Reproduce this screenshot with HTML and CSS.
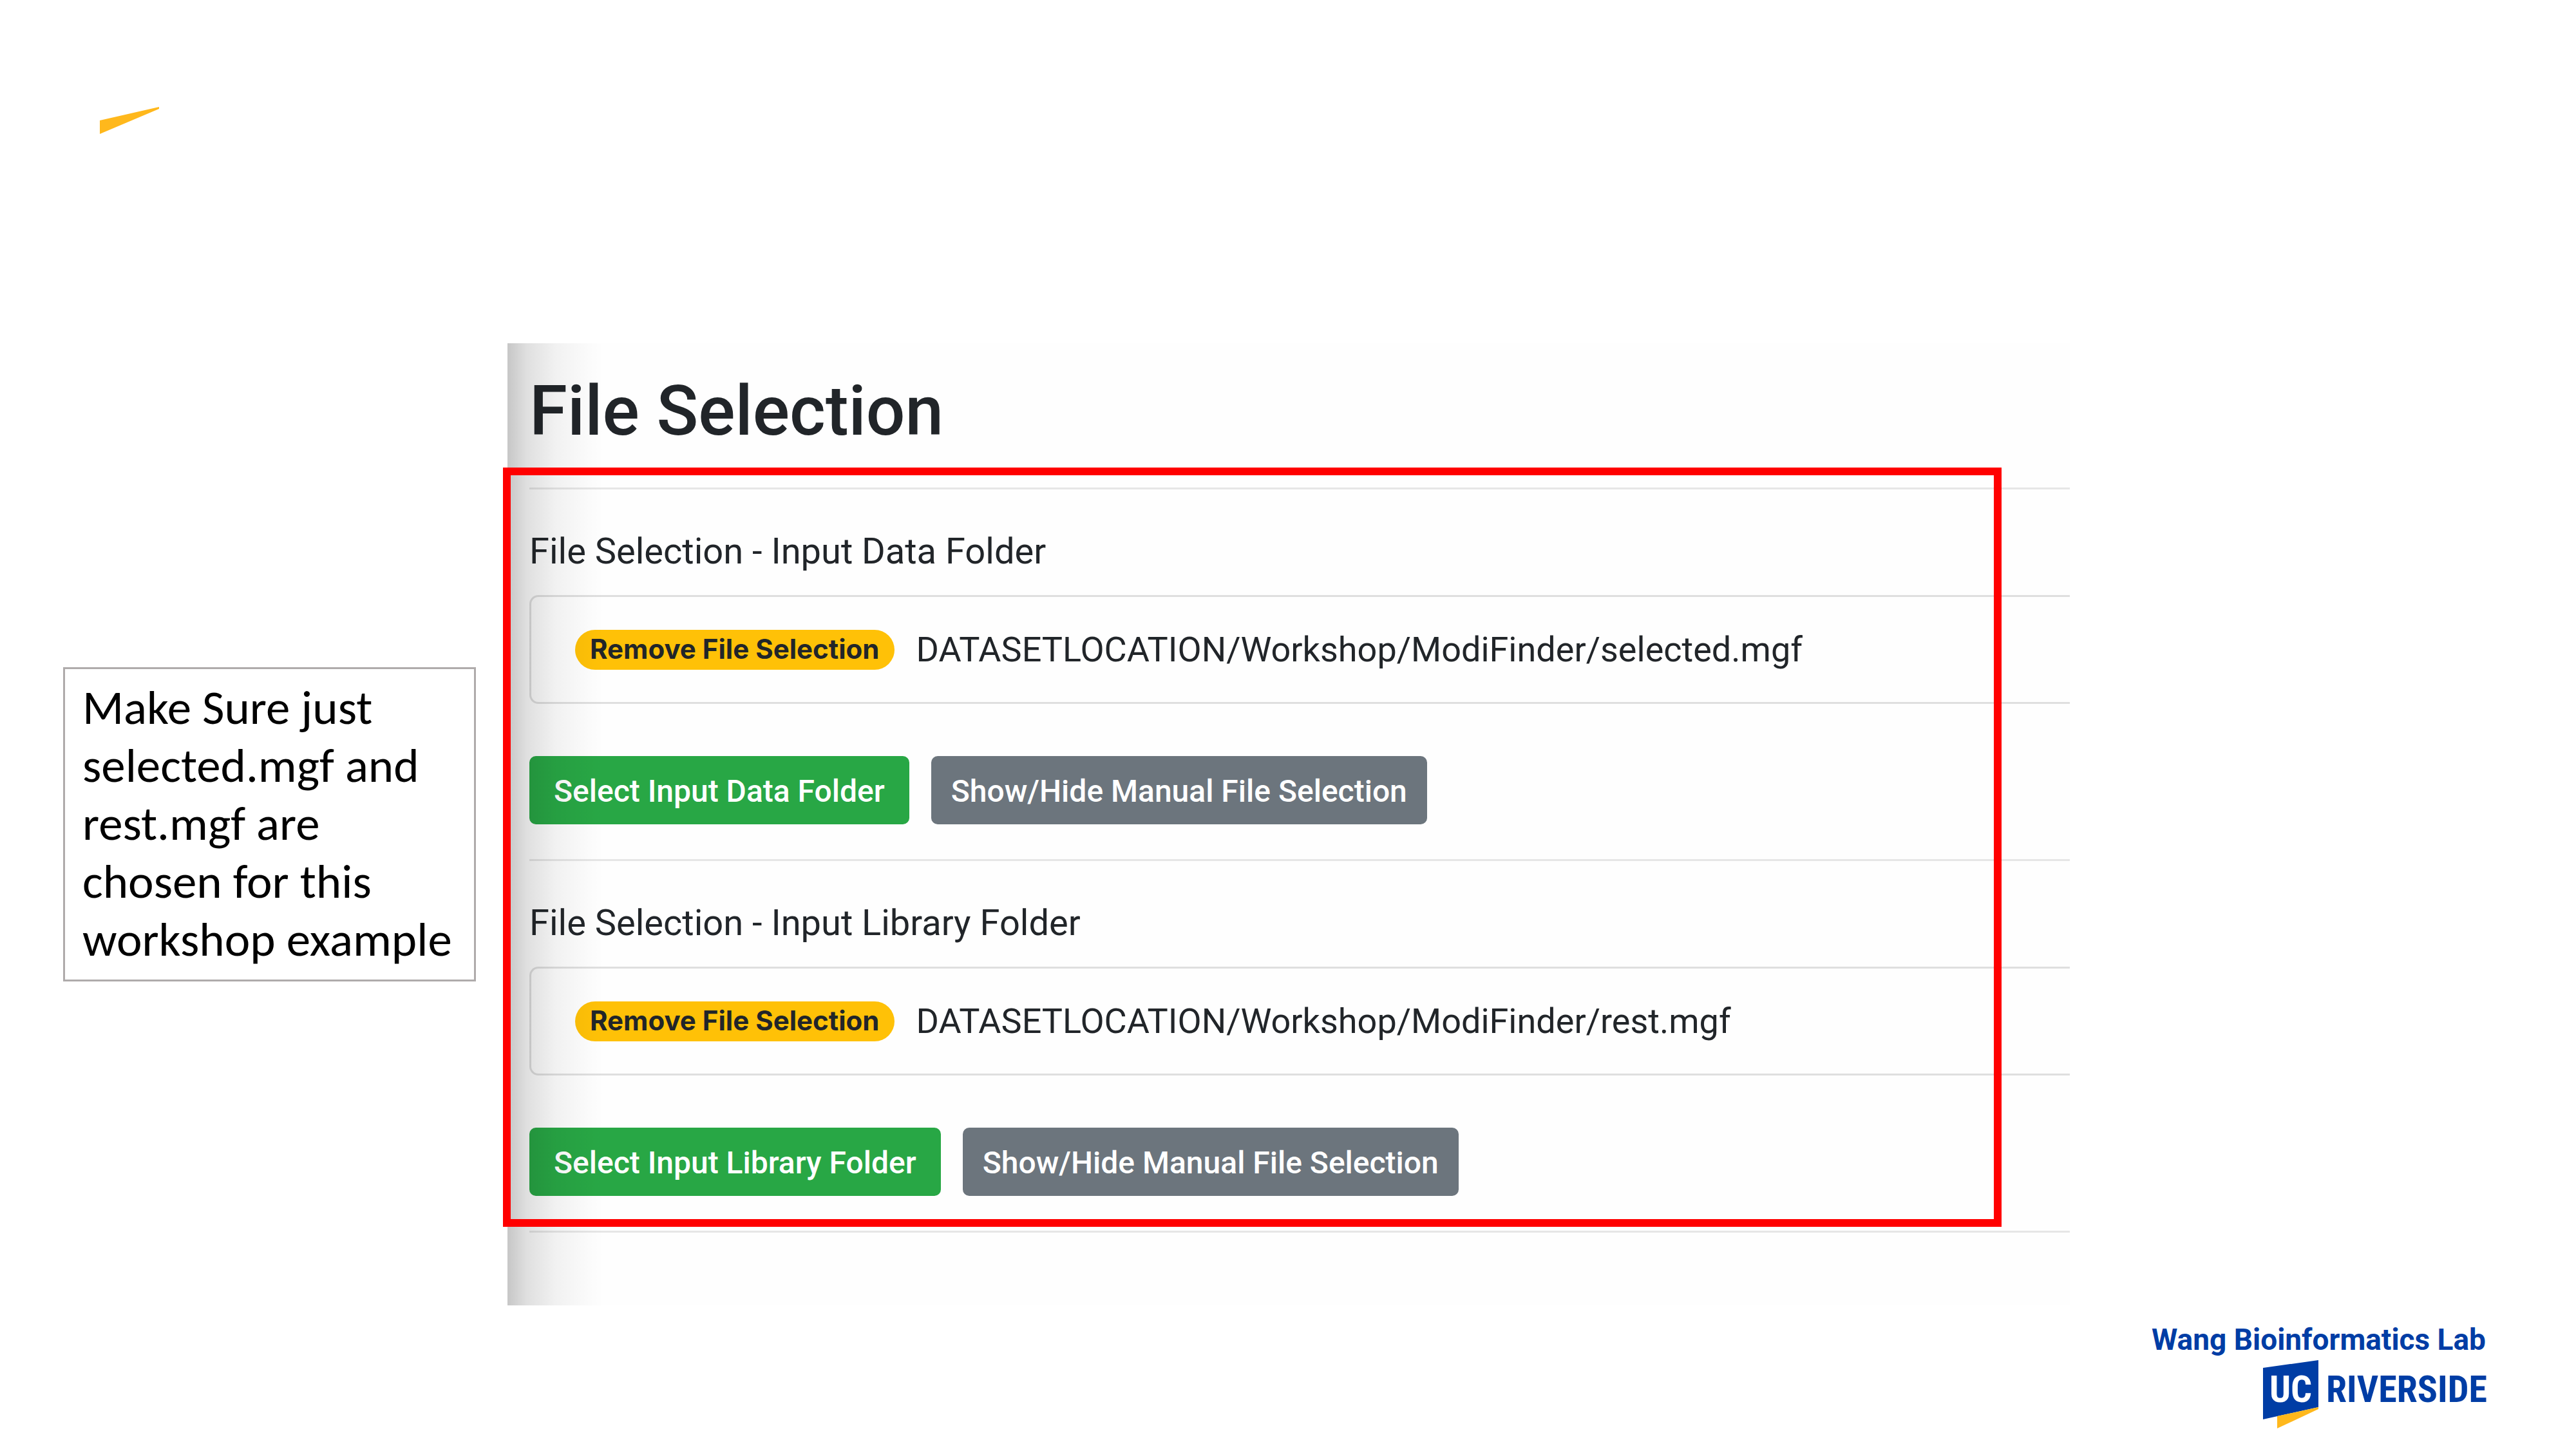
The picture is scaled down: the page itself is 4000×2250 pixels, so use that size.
FILE: index.html
```html
<!DOCTYPE html>
<html lang="en">
<head>
<meta charset="utf-8">
<meta name="viewport" content="width=device-width, initial-scale=1">
<title>File Selection</title>
<link rel="stylesheet" href="styles.css">
</head>
<body>
<div class="slide">
  <header class="slide-header">
    <svg class="wedge" viewBox="0 0 92 42" aria-hidden="true"><path d="M0 21 92 0v3L0 42z"/></svg>
  </header>

  <main class="slide-main">
    <aside class="note">Make Sure just<br>selected.mgf and<br>rest.mgf are<br>chosen for this<br>workshop example</aside>

    <section class="panel">
      <h1 class="panel-title">File Selection</h1>
      <hr class="rule">
      <section class="group">
        <h2 class="group-title">File Selection - Input Data Folder</h2>
        <div class="file-box">
          <button type="button" class="pill">Remove File Selection</button>
          <span class="path">DATASETLOCATION/Workshop/ModiFinder/selected.mgf</span>
        </div>
        <div class="actions">
          <button type="button" class="btn btn-success">Select Input Data Folder</button>
          <button type="button" class="btn btn-secondary">Show/Hide Manual File Selection</button>
        </div>
      </section>
      <hr class="rule">
      <section class="group">
        <h2 class="group-title">File Selection - Input Library Folder</h2>
        <div class="file-box">
          <button type="button" class="pill">Remove File Selection</button>
          <span class="path">DATASETLOCATION/Workshop/ModiFinder/rest.mgf</span>
        </div>
        <div class="actions">
          <button type="button" class="btn btn-success">Select Input Library Folder</button>
          <button type="button" class="btn btn-secondary">Show/Hide Manual File Selection</button>
        </div>
      </section>
      <hr class="rule">
      <div class="highlight"></div>
    </section>
  </main>

  <footer class="slide-footer">
    <p class="lab">Wang Bioinformatics Lab</p>
    <svg class="logo" viewBox="0 0 350 106" role="img" aria-label="UC Riverside">
      <path class="logo-blue" d="M0 12 86 0v73L0 92z"/>
      <path class="logo-gold" d="M22 87 86 73v3L22 106z"/>
      <text class="logo-uc" x="43" y="65" text-anchor="middle">UC</text>
      <text class="logo-name" x="98" y="65">RIVERSIDE</text>
    </svg>
  </footer>
</div>
</body>
</html>
```
FILE: styles.css
```css
* {
  box-sizing: border-box;
}

body {
  margin: 0;
  background: #fff;
  color: #212529;
  font-family: Roboto, "Liberation Sans", sans-serif;
}

.slide {
  min-height: 100vh;
  padding-bottom: 32px;
}

.slide-header {
  padding: 166px 155px 0;
}

.wedge {
  display: block;
  width: 92px;
  height: 42px;
  fill: #ffb81c;
}

/* Note and captured panel, side by side */
.slide-main {
  display: flex;
  align-items: center;
  gap: 49px;
  margin-top: 325px;
  padding: 0 786px 0 98px;
}

.note {
  flex: 0 0 641px;
  padding: 15px 27px 17px;
  border: 3px solid #afabab;
  color: #000;
  font-family: Carlito, Calibri, Lato, sans-serif;
  font-size: 75px;
  line-height: 90px;
  white-space: nowrap;
}

.panel {
  position: relative;
  flex: 1;
  min-width: 0;
  padding: 42px 0 113px 34px;
  background: #fefefe;
}

/* Shadow cast over the panel's left edge */
.panel::before {
  content: "";
  position: absolute;
  inset: 0 auto 0 0;
  width: 150px;
  background: linear-gradient(to right, rgba(0, 0, 0, .22), rgba(0, 0, 0, .12) 20%, rgba(0, 0, 0, .05) 50%, rgba(0, 0, 0, .01) 85%, transparent);
  pointer-events: none;
}

.highlight {
  position: absolute;
  inset: 193px 106px 122px -7px;
  border: 12px solid #f00;
  pointer-events: none;
}

.panel-title {
  margin: 0 0 54px;
  font-size: 107px;
  font-weight: 500;
  line-height: 128px;
}

.rule {
  height: 3px;
  margin: 0;
  border: 0;
  background: #e6e6e6;
}

.group {
  padding: 54px 0;
}

.group-title {
  margin: 0 0 26px;
  font-size: 56px;
  font-weight: 400;
  line-height: 84px;
}

.file-box {
  display: flex;
  align-items: center;
  gap: 34px;
  height: 169px;
  padding-left: 68px;
  border: 3px solid #dfdfdf;
  border-right: 0;
  border-radius: 14px 0 0 14px;
}

.pill {
  height: 62px;
  padding: 0 23px 2px;
  border: 0;
  border-radius: 31px;
  background: #ffc107;
  color: #212529;
  font: 700 42px/60px Inter, sans-serif;
  white-space: nowrap;
}

.path {
  font-size: 54px;
  line-height: 84px;
  white-space: nowrap;
}

.actions {
  display: flex;
  gap: 34px;
  margin-top: 81px;
}

.btn {
  height: 106px;
  padding: 4px 31px 0;
  border: 0;
  border-radius: 10px;
  color: #fff;
  font: 500 48px/72px Roboto, sans-serif;
  white-space: nowrap;
}

.btn-success {
  padding-right: 38px;
  padding-left: 38px;
  background: #28a745;
}

.btn-secondary {
  background: #6c757d;
}

.slide-footer {
  display: flex;
  flex-direction: column;
  align-items: flex-end;
  gap: 4px;
  padding: 25px 136px 0 0;
  color: #003da5;
}

.lab {
  margin: 0 4px 0 0;
  font: 700 46px/56px Roboto, sans-serif;
}

.logo {
  width: 350px;
  height: 106px;
}

.logo-blue,
.logo-name {
  fill: #003da5;
}

.logo-gold {
  fill: #ffb81c;
}

.logo-uc,
.logo-name {
  font-family: "Roboto Condensed", "Liberation Sans Narrow", Roboto, sans-serif;
  font-weight: 700;
  font-size: 58px;
}

.logo-uc {
  fill: #fff;
}
```
